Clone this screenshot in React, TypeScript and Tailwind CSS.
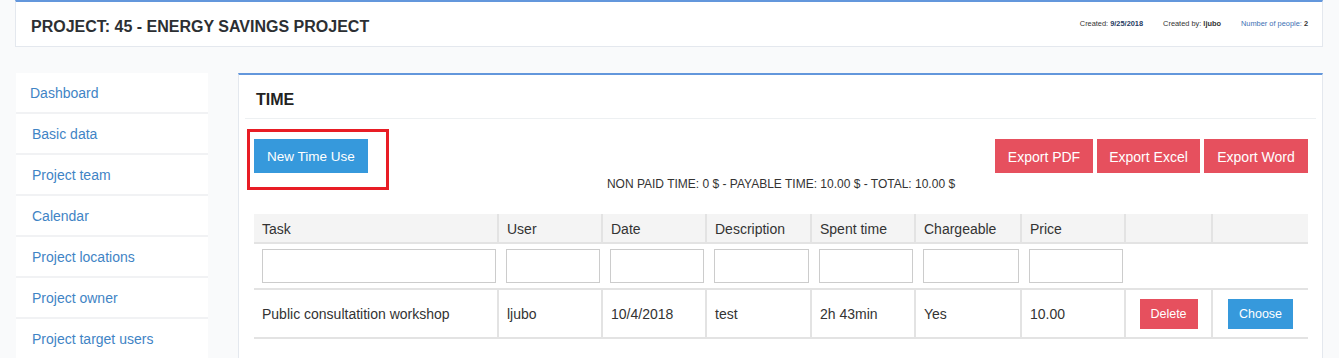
import React from 'react'

const navItems = [
  'Dashboard',
  'Basic data',
  'Project team',
  'Calendar',
  'Project locations',
  'Project owner',
  'Project target users',
]

const columns = [
  { label: 'Task', w: 'w-[244px]', filter: true },
  { label: 'User', w: 'w-[104px]', filter: true },
  { label: 'Date', w: 'w-[104px]', filter: true },
  { label: 'Description', w: 'w-[105px]', filter: true },
  { label: 'Spent time', w: 'w-[104px]', filter: true },
  { label: 'Chargeable', w: 'w-[106px]', filter: true },
  { label: 'Price', w: 'w-[104px]', filter: true },
  { label: '', w: 'w-[87px]', filter: false },
  { label: '', w: 'w-[96px]', filter: false },
]

const row = ['Public consultatition workshop', 'ljubo', '10/4/2018', 'test', '2h 43min', 'Yes', '10.00']

function Header() {
  return (
    <div className="ml-[15px] w-[1308px] h-[47px] bg-white border border-[#e4e8ee] border-t-2 border-t-[#6397dc] flex items-center justify-between pl-[15px] pr-[14px]">
      <h1 className="text-[16px] font-bold text-[#2c2f33] pt-[5px]">
        PROJECT: 45 - ENERGY SAVINGS PROJECT
      </h1>
      <div className="flex gap-[20px] text-[7.4px] text-[#333]">
        <span>Created: <b className="text-[#1f3b63]">9/25/2018</b></span>
        <span>Created by: <b>ljubo</b></span>
        <span className="text-[#3b6fb3]">Number of people: <b className="text-[#333]">2</b></span>
      </div>
    </div>
  )
}

function Sidebar() {
  return (
    <nav className="ml-[16px] w-[192px] bg-white self-start">
      {navItems.map((item, i) => (
        <div
          key={item}
          className={`h-[41px] flex items-center pt-[2px] border-b-2 border-[#f1f2f4] text-[14px] text-[#3f84c5] ${i === 0 ? 'pl-[14px]' : 'pl-[16px]'}`}
        >
          {item}
        </div>
      ))}
    </nav>
  )
}

function TimePanel() {
  return (
    <section className="ml-[30px] w-[1085px] bg-white border-l border-r border-[#e4e8ee] border-t-2 border-t-[#6397dc] min-h-[290px]">
      <div className="mx-[6px] h-[44px] border-b border-[#edf0f2] flex items-center pl-[11px] pt-[7px]">
        <h2 className="text-[16px] font-bold text-[#222]">TIME</h2>
      </div>

      <div className="pl-[15px] pr-[14px] pt-[20px]">
        <div className="flex items-start justify-between">
          <div className="relative">
            <button className="h-[34px] w-[114px] pt-[2px] bg-[#3699dc] text-white text-[13.5px]">New Time Use</button>
            <div className="absolute left-[-7px] top-[-10px] w-[142px] h-[61px] border-[3px] border-[#e81d25] pointer-events-none" />
          </div>
          <div className="flex gap-[4px]">
            <button className="h-[34px] w-[98px] pt-[2px] bg-[#e6505e] text-white text-[14px]">Export PDF</button>
            <button className="h-[34px] w-[103px] pt-[2px] bg-[#e6505e] text-white text-[14px]">Export Excel</button>
            <button className="h-[34px] w-[104px] pt-[2px] bg-[#e6505e] text-white text-[14px]">Export Word</button>
          </div>
        </div>

        <p className="text-center text-[12px] leading-[16px] text-[#333] mt-[3px]">
          NON PAID TIME: 0 $ - PAYABLE TIME: 10.00 $ - TOTAL: 10.00 $
        </p>

        <table className="mt-[22px] w-[1054px] table-fixed border-collapse text-[14px] text-[#333]">
          <colgroup>
            {columns.map((c, i) => (
              <col key={i} className={c.w} />
            ))}
          </colgroup>
          <thead>
            <tr className="h-[29px] bg-[#f4f4f4] border-b-2 border-[#e3e3e3]">
              {columns.map((c, i) => (
                <th key={i} className={`text-left font-normal pl-[8px] pt-[2px] ${i > 0 ? 'border-l-2 border-[#e3e3e3]' : ''}`}>
                  {c.label}
                </th>
              ))}
            </tr>
          </thead>
          <tbody>
            <tr className="h-[46px] border-b-2 border-[#e3e3e3]">
              {columns.map((c, i) => (
                <td key={i} className="pl-[8px] pr-[2px]">
                  {c.filter && <input className="block w-full h-[34px] border border-[#cccccc] bg-white" />}
                </td>
              ))}
            </tr>
            <tr className="h-[49px] border-b-2 border-[#e3e3e3]">
              {row.map((v, i) => (
                <td key={i} className={`pl-[8px] pt-[2px] ${i > 0 ? 'border-l-2 border-[#e3e3e3]' : ''}`}>
                  {v}
                </td>
              ))}
              <td className="border-l-2 border-[#e3e3e3] text-center">
                <button className="h-[30px] w-[58px] pt-[1px] bg-[#e6505e] text-white text-[12.5px]">Delete</button>
              </td>
              <td className="border-l-2 border-[#e3e3e3] text-center">
                <button className="h-[30px] w-[65px] pt-[1px] bg-[#3699dc] text-white text-[12.5px]">Choose</button>
              </td>
            </tr>
          </tbody>
        </table>
      </div>
    </section>
  )
}

export default function App() {
  return (
    <div className="w-[1339px] h-[358px] overflow-hidden bg-[#f9fafb] font-['Liberation_Sans',Arial,sans-serif]">
      <Header />
      <div className="flex mt-[26px]">
        <Sidebar />
        <TimePanel />
      </div>
    </div>
  )
}
